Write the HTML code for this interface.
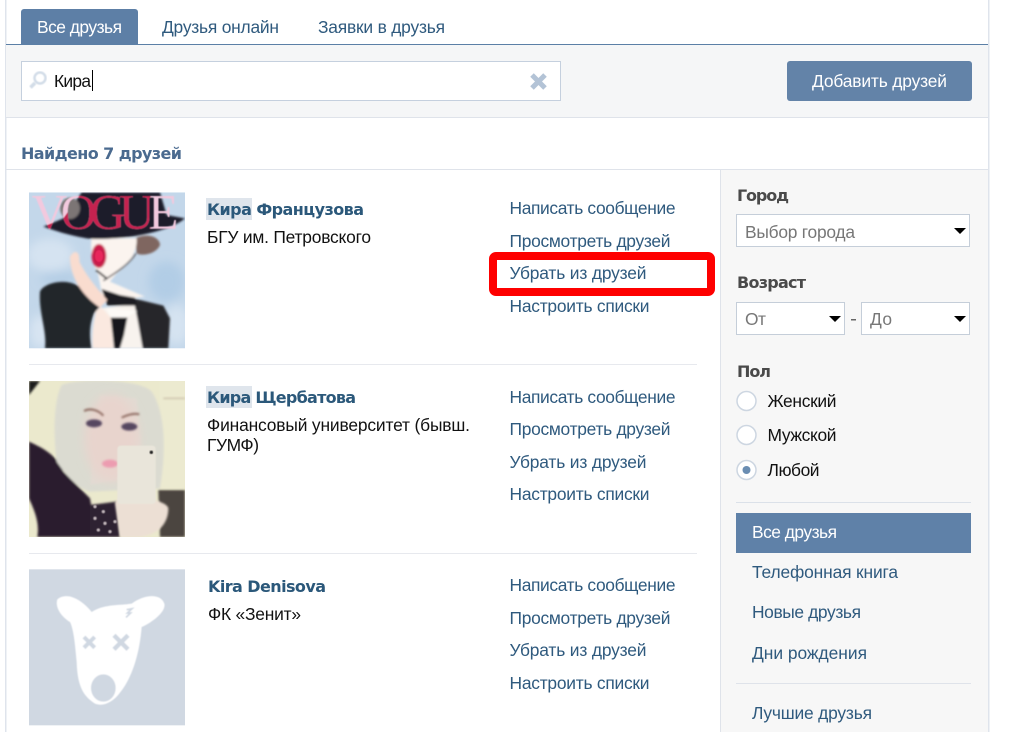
<!DOCTYPE html>
<html lang="ru"><head><meta charset="utf-8"><title>Друзья</title>
<style>
html,body{margin:0;padding:0;background:#fff;width:1009px;height:732px;overflow:hidden}
svg{display:block}
text{font-family:"Liberation Sans","DejaVu Sans",sans-serif;font-size:17.4px;white-space:pre}
.l{fill:#2f5a7e}.k{fill:#111}
.b,.h,.n{font-family:"DejaVu Sans","Liberation Sans",sans-serif;font-weight:700;font-size:16px}
.b{fill:#2b587a}.h{fill:#4a4a4a}.n{fill:#4a6a8f}
.g{fill:#777}
</style></head><body>
<svg width="1009" height="732" viewBox="0 0 1009 732" xmlns="http://www.w3.org/2000/svg">
<defs>
<filter id="bx" x="-15%" y="-15%" width="130%" height="130%"><feGaussianBlur stdDeviation="14"/></filter>
<filter id="bl" x="-5%" y="-5%" width="110%" height="110%"><feGaussianBlur stdDeviation="3.5"/></filter>
<filter id="bs" x="-5%" y="-5%" width="110%" height="110%"><feGaussianBlur stdDeviation="1.5"/></filter>
<filter id="ic"><feGaussianBlur stdDeviation="0.5"/></filter>
<clipPath id="a1"><rect x="27" y="22" width="468" height="468"/></clipPath>
<clipPath id="a2"><rect x="27" y="18" width="468" height="468"/></clipPath>
<clipPath id="hat"><path d="M185 22L392 22L392 150L200 160C140 150 100 135 70 125L130 100Z"/></clipPath>
</defs>
<rect width="1009" height="732" fill="#fff"/>
<!-- page frame -->
<rect x="5" y="0" width="1.5" height="732" fill="#dfe4ec"/>
<rect x="988" y="0" width="1.5" height="732" fill="#dfe4ec"/>
<!-- toolbar -->
<rect x="6" y="45" width="982" height="72" fill="#f5f6f7"/>
<rect x="6" y="117" width="982" height="1" fill="#dfe3ea"/>
<rect x="6" y="44" width="982" height="1" fill="#5b7fa6"/>
<path d="M21 44V12a3 3 0 0 1 3-3h111a3 3 0 0 1 3 3v32z" fill="#5d7fa6"/>
<text x="37" y="33" fill="#fff" textLength="85">Все друзья</text>
<text x="162" y="33" class="l" textLength="117">Друзья онлайн</text>
<text x="318" y="33" class="l" textLength="127">Заявки в друзья</text>
<!-- search -->
<rect x="21.5" y="61.5" width="539" height="39" fill="#fff" stroke="#c5d0de"/>
<g filter="url(#ic)" fill="none" stroke="#d3dde8"><circle cx="40" cy="78" r="5.5" stroke-width="2.5"/><path d="M35 83l-4.500 4.500" stroke-width="3.500"/></g>
<text x="54" y="87" class="k" textLength="37">Кира</text>
<rect x="92" y="70" width="1" height="21" fill="#000"/>
<path d="M532 75l13 13M545 75l-13 13" stroke="#b3c3d6" stroke-width="5" fill="none"/>
<rect x="787" y="61" width="185" height="40" rx="3" fill="#6383a8"/>
<text x="812" y="87" fill="#fff" textLength="135">Добавить друзей</text>
<!-- heading -->
<text x="21" y="159" class="n" textLength="161">Найдено 7 друзей</text>
<rect x="6" y="169" width="982" height="1" fill="#dfe3ea"/>
<!-- sidebar -->
<rect x="720" y="170" width="268" height="562" fill="#f7f7f7"/>
<rect x="720" y="170" width="1" height="562" fill="#dfe3ea"/>
<text x="737" y="201" class="h" textLength="52">Город</text>
<rect x="736.500" y="214.500" width="233" height="32" fill="#fff" stroke="#c5ced9"/>
<text x="745" y="238" class="g" textLength="110">Выбор города</text>
<path d="M954 228h12l-6 6z" fill="#000"/>
<text x="737" y="288" class="h" textLength="69">Возраст</text>
<rect x="736.500" y="302.500" width="108" height="32" fill="#fff" stroke="#c5ced9"/>
<text x="745" y="325" class="g" textLength="21">От</text>
<path d="M829 316h12l-6 6z" fill="#000"/>
<rect x="851" y="319" width="5" height="1.500" fill="#666"/>
<rect x="861.500" y="302.500" width="108" height="32" fill="#fff" stroke="#c5ced9"/>
<text x="870" y="325" class="g" textLength="22">До</text>
<path d="M954 316h12l-6 6z" fill="#000"/>
<text x="737" y="377" class="h" textLength="34">Пол</text>
<circle cx="746.500" cy="401" r="9.500" fill="#fff" stroke="#cdd6e1" stroke-width="1.500"/>
<circle cx="746.500" cy="435" r="9.500" fill="#fff" stroke="#cdd6e1" stroke-width="1.500"/>
<circle cx="746.500" cy="470" r="9.500" fill="#fff" stroke="#cdd6e1" stroke-width="1.500"/>
<circle cx="746.500" cy="470" r="4" fill="#6a8db2"/>
<text x="767.500" y="407" class="k" textLength="69">Женский</text>
<text x="767.500" y="441" class="k" textLength="69">Мужской</text>
<text x="767.500" y="476" class="k" textLength="52">Любой</text>
<rect x="736" y="502" width="235" height="1" fill="#dbe1e9"/>
<rect x="736" y="513" width="235" height="40" fill="#5f81a8"/>
<text x="752" y="538" fill="#fff" textLength="85">Все друзья</text>
<text x="752" y="578" class="l" textLength="146">Телефонная книга</text>
<text x="752" y="618" class="l" textLength="109">Новые друзья</text>
<text x="752" y="659" class="l" textLength="115">Дни рождения</text>
<rect x="736" y="683" width="235" height="1" fill="#dfe3ea"/>
<text x="752" y="719" class="l" textLength="120">Лучшие друзья</text>
<!-- row 1 -->
<rect x="206" y="198" width="46" height="22" fill="#dfe5ec"/>
<text x="207" y="215" class="b" textLength="157">Кира Французова</text>
<text x="207" y="243" class="k" textLength="164">БГУ им. Петровского</text>
<text x="509.500" y="214" class="l" textLength="166">Написать сообщение</text>
<text x="509.500" y="247" class="l" textLength="161">Просмотреть друзей</text>
<text x="509.500" y="279" class="l" textLength="137">Убрать из друзей</text>
<text x="509.500" y="312" class="l" textLength="140">Настроить списки</text>
<rect x="29" y="364" width="668" height="1" fill="#e7e9ee"/>
<!-- row 2 -->
<rect x="206" y="386" width="46" height="22" fill="#dfe5ec"/>
<text x="207" y="403" class="b" textLength="149">Кира Щербатова</text>
<text x="207" y="431" class="k" textLength="263">Финансовый университет (бывш.</text>
<text x="207" y="451" class="k" textLength="52">ГУМФ)</text>
<text x="509.500" y="403" class="l" textLength="166">Написать сообщение</text>
<text x="509.500" y="435" class="l" textLength="161">Просмотреть друзей</text>
<text x="509.500" y="468" class="l" textLength="137">Убрать из друзей</text>
<text x="509.500" y="500" class="l" textLength="140">Настроить списки</text>
<rect x="29" y="553" width="668" height="1" fill="#e7e9ee"/>
<!-- row 3 -->
<text x="208" y="592" class="b" textLength="118">Kira Denisova</text>
<text x="208" y="620" class="k" textLength="93">ФК «Зенит»</text>
<text x="509.500" y="591" class="l" textLength="166">Написать сообщение</text>
<text x="509.500" y="624" class="l" textLength="161">Просмотреть друзей</text>
<text x="509.500" y="656" class="l" textLength="137">Убрать из друзей</text>
<text x="509.500" y="689" class="l" textLength="140">Настроить списки</text>
<!-- avatar 1 -->
<g transform="translate(20 185) scale(.33333)" clip-path="url(#a1)">
<rect x="27" y="22" width="468" height="468" fill="#c3d7ea"/>
<g filter="url(#bx)">
<ellipse cx="90" cy="210" rx="70" ry="50" fill="#d5e3f1"/>
<ellipse cx="440" cy="290" rx="55" ry="60" fill="#b2cde6"/>
<ellipse cx="470" cy="420" rx="40" ry="60" fill="#d5e3f1"/>
<ellipse cx="60" cy="440" rx="30" ry="50" fill="#d8e5f2"/>
<ellipse cx="120" cy="280" rx="60" ry="20" fill="#b4cde5"/>
</g>
<g filter="url(#bl)">
<path d="M345 160C390 140 420 160 420 180C410 205 370 215 350 205Z" fill="#7f6660"/>
<path d="M215 160L350 160C352 200 330 235 290 265L270 290L375 335L250 350L235 270C215 230 210 190 215 160Z" fill="#fbf4ef"/>
<path d="M235 370L370 355L372 490H235Z" fill="#f8f3ee"/>
<path d="M60 320C70 295 130 280 170 300L215 325L240 365L222 385C208 420 208 450 215 490H75C82 440 55 380 60 320Z" fill="#23252c"/>
<path d="M340 340L430 362L450 400L445 490H368L352 400Z" fill="#25262c"/>
<path d="M245 312L300 330L345 338L350 362L262 362Z" fill="#1b1b20"/>
<path d="M258 370L352 378L320 397L272 397Z" fill="#fdfaf6"/>
<path d="M272 398L322 398L312 450L300 490H282L278 450Z" fill="#15171d"/>
<path d="M150 215C165 190 180 200 178 230C195 265 225 305 262 345L240 368C190 335 150 280 150 215Z" fill="#f9dccf"/>
<path d="M228 378L242 365L272 398L280 490H218C214 450 220 410 228 378Z" fill="#fbe9e0"/>
<path d="M347 205C330 235 290 262 250 287" stroke="#3a3336" stroke-width="4" fill="none"/>
<path d="M228 255L262 282" stroke="#2b2b2b" stroke-width="6" fill="none"/>
<ellipse cx="237" cy="213" rx="22" ry="36" fill="#c81c4c"/>
<path d="M185 22L420 22L440 90L495 100C450 140 300 170 200 160C140 150 100 135 70 125L130 100Z" fill="#1a1e2a"/>
<ellipse cx="150" cy="70" rx="30" ry="32" fill="#7c7474"/>
</g>
<g filter="url(#bs)">
<text x="35" y="130" textLength="440" style="font-family:'Liberation Serif',serif;font-size:148px;fill:#f2c9de">VOGUE</text>
<g clip-path="url(#hat)"><text x="35" y="130" textLength="440" style="font-family:'Liberation Serif',serif;font-size:148px;fill:#c4204f">VOGUE</text></g>
</g>
<ellipse cx="237" cy="213" rx="12" ry="18" fill="#e8285c" filter="url(#bs)"/>
</g>
<!-- avatar 2 -->
<g transform="translate(20 375) scale(.33333)" clip-path="url(#a2)">
<rect x="27" y="18" width="468" height="468" fill="#ebe9cd"/>
<g filter="url(#bl)">
<path d="M27 18H60L27 60Z" fill="#1a1a1a"/>
<path d="M420 18H495V340L420 340Z" fill="#ecead0"/>
<path d="M430 70H495" stroke="#b8a890" stroke-width="3"/>
<path d="M27 200C70 220 110 240 130 290L210 370L230 486H52C60 440 40 400 27 370Z" fill="#2b1d2d"/>
<path d="M415 345H495V486H420Z" fill="#4c4440"/>
<path d="M210 390L290 380L300 486H210Z" fill="#2e2230"/>
<path d="M125 30C170 10 360 10 395 50C435 110 440 220 420 340L210 350C170 340 130 290 110 260C100 180 100 80 125 30Z" fill="#dbdbd1"/>
<path d="M240 60L350 70L370 300L210 330Z" fill="#e2dad2"/>
</g>
<g filter="url(#bx)"><ellipse cx="275" cy="190" rx="82" ry="130" fill="#e8d4cd"/></g>
<g filter="url(#bl)">
<path d="M192 108C210 98 235 105 250 122M305 128C325 118 345 115 358 118" stroke="#8d6a60" stroke-width="6" fill="none"/>
<ellipse cx="222" cy="145" rx="24" ry="12" fill="#564660"/><ellipse cx="328" cy="155" rx="24" ry="12" fill="#564660"/>
<ellipse cx="270" cy="266" rx="24" ry="12" fill="#ec9cb0"/>
<path d="M285 385C290 350 440 370 445 400C445 440 420 486 340 486L300 486Z" fill="#ecdfd4"/>
</g>
<rect x="292" y="212" width="115" height="175" rx="10" fill="#e9e5da" filter="url(#bs)"/>
<circle cx="394" cy="232" r="5" fill="#222" filter="url(#bs)"/>
<g fill="#bfb4b8" filter="url(#bs)"><circle cx="225" cy="395" r="5"/><circle cx="250" cy="410" r="5"/><circle cx="225" cy="430" r="5"/><circle cx="255" cy="445" r="5"/><circle cx="285" cy="440" r="5"/><circle cx="235" cy="465" r="5"/><circle cx="270" cy="470" r="5"/></g>
</g>
<!-- avatar 3 -->
<g transform="translate(20 562) scale(.33333)">
<rect x="27" y="22" width="468" height="468" fill="#d0d8e2"/>
<g filter="url(#bs)">
<path d="M112 112C140 88 185 112 215 150C250 126 300 130 335 125C370 98 422 92 433 125C440 152 385 188 365 195C360 260 342 340 300 392C280 420 250 435 225 425C195 405 172 380 170 300C165 250 162 205 150 180C125 165 104 136 112 112Z" fill="#fff"/>
<ellipse cx="250" cy="378" rx="37" ry="41" fill="#d0d8e2"/>
<path d="M192 225L224 257M224 225L192 257" stroke="#d0d8e2" stroke-width="12" fill="none"/>
<path d="M282 220L324 262M324 220L282 262" stroke="#d0d8e2" stroke-width="13" fill="none"/>
<path d="M320 143L336 140L322 153L332 153L318 166" stroke="#d0d8e2" stroke-width="5" fill="none"/>
</g>
</g>
<!-- red highlight -->
<rect x="493" y="256" width="218" height="36" rx="3" fill="none" stroke="#fe0000" stroke-width="8"/>
</svg>
</body></html>
